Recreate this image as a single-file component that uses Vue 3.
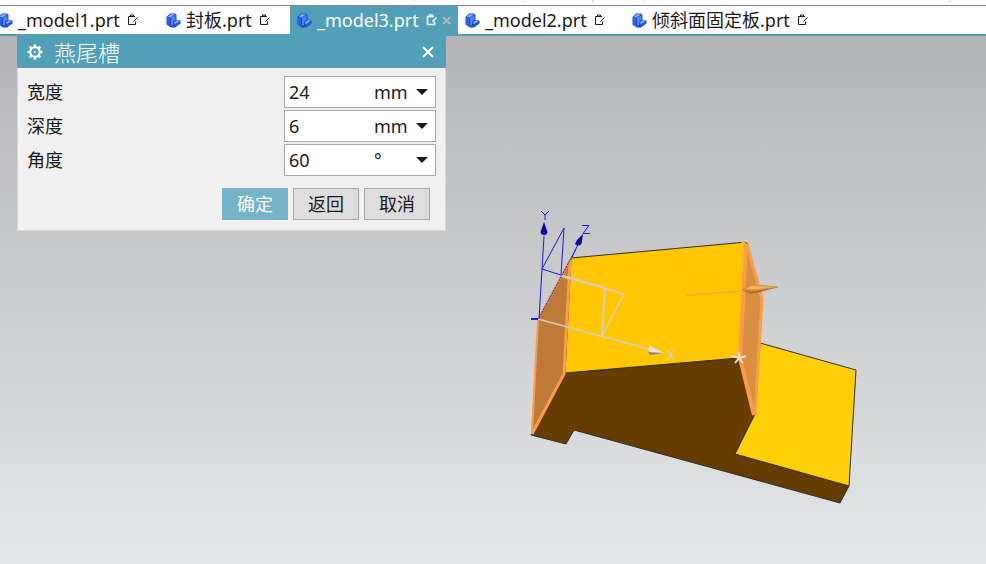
<script setup>
import { reactive } from 'vue'

const tabs = [
  { name: '_model1.prt', width: 161 },
  { name: '封板.prt', width: 131 },
  { name: '_model3.prt', width: 168, active: true },
  { name: '_model2.prt', width: 167 },
  { name: '倾斜面固定板.prt', width: 200 },
]

const fields = reactive([
  { id: 'width', label: '宽度', value: '24', unit: 'mm' },
  { id: 'depth', label: '深度', value: '6', unit: 'mm' },
  { id: 'angle', label: '角度', value: '60', unit: '°' },
])
</script>

<template>
  <div class="app">
    <div class="toolbar"><i></i><i></i><i></i><i></i><i></i></div>
    <nav class="tabs">
      <a
        v-for="t in tabs"
        :key="t.name"
        href="#"
        class="tab"
        :class="{ active: t.active }"
        :style="{ width: t.width + 'px' }"
      >
        <svg class="part" viewBox="0 0 15 15">
          <path d="M0.5 4 4 0.500H9L10.500 2V7L14.500 7.500V10.500L9 14.500H5L0.500 11.500Z" fill="#1a45c8" />
          <path d="M1 4 4 5V13L1 11Z" fill="#2b62e8" />
          <path d="M5 5 9.500 2V7L7 9V12L5 13Z" fill="#4a86f2" />
          <path d="M1.500 4 4.500 1.200H9L5 4.500Z" fill="#86aaf6" />
          <path d="M7.500 10 10.500 7.500H14L9.500 11Z" fill="#8ab6ff" />
          <path d="M8 11.500 14 8.500V10.500L9 13.500Z" fill="#2359de" />
        </svg>
        <span>{{ t.name }}</span>
        <svg class="modified" viewBox="0 0 11 12">
          <path d="M8 2.500H1.500V10.500H8.500V7.500M3.500 2.500V1H6.500V2.500M6.500 7.500 10.500 3.500" />
        </svg>
        <svg v-if="t.active" class="tab-close" viewBox="0 0 9 9"><path d="M1 1 8 8M8 1 1 8" /></svg>
      </a>
    </nav>

    <main class="viewport">
      <svg class="scene" width="986" height="528" viewBox="0 36 986 528">
        <path class="edge" fill="#663d00" d="M531 435 565 373 739 358 754 416 735 454 849 486 840 503 574 430 566 444Z" />
        <path class="edge" fill="#ffc604" d="M571 258 747 242 739 358 565 373Z" />
        <path class="edge" fill="#ffcf0a" d="M760 343 856 370 849 486 735 454 754 416Z" />
        <path fill="#be7a37" d="M571 259 565 373 531 435 538 319Z" />
        <path fill="none" stroke="#f99d4d" stroke-width="3" d="M570 260 564 374 532 434" />
        <path fill="none" stroke="#f99d4d" stroke-width="2" d="M571 258 538 319 532 434" />
        <path fill="#d98f40" d="M747 244 762 299 755 415 740 358Z" />
        <path fill="none" stroke="#f99d4d" stroke-width="4" d="M746 244 740 358 754 415" />
        <path fill="none" stroke="#f99d4d" stroke-width="3" d="M747 244 762 299 755 415" />
        <g fill="none" stroke="#d2cdc6" stroke-width="1.5">
          <path d="M538 319 652 350M561 275 624 294 602 336" />
          <path stroke-width="2" d="M561 276 605 288 602 336" />
          <path d="M667 350 674 360M674 350 667 360" />
        </g>
        <path fill="#e4e4df" d="M649 345 664 353 649 354Z" />
        <path fill="#8d8b80" d="M648 352 650 355 664 353Z" />
        <g fill="none" stroke="#1b1be2">
          <path d="M544 236 539 319M542 269 564 228 561 275 542 269" />
          <path stroke-dasharray="2 1" d="M539 318 576 249" />
          <path d="M572 257 580 240M541 211 545 215 549 211M545 215V220M582 225.500H589L583 233.500H590" />
          <path stroke-width="2" d="M531 319H538" />
        </g>
        <path fill="#0808a0" d="M544 222 547.500 232Q547 235 544 235T540.500 232Z" />
        <path fill="#0808a0" d="M583 234 581.500 244Q578 247 575 244L577 240Z" />
        <path fill="none" stroke="#f3a04c" d="M686 295.500 748 290.500" />
        <path fill="#b07128" d="M742 290 750 285 760 285 779 287 756 293 750 294Z" />
        <path fill="#dd963f" d="M743 290 750 285 760 285 779 287 755 291Z" />
        <path fill="#f2b566" d="M745 289 752 286 776 287 755 289Z" />
        <path fill="none" stroke="#e7c5a8" d="M746 235V241M741 243 752 240M742 239 751 245" />
        <path fill="none" stroke="#e4ded5" stroke-width="2" d="M739 351V357M732 356 739 358 746 356M739 358 735 363M739 358 743 363" />
      </svg>

      <form class="dialog" @submit.prevent>
        <header class="titlebar">
          <svg class="gear" viewBox="0 0 16 16">
            <circle cx="8" cy="8" r="4.700" fill="none" stroke="#fff" stroke-width="2" />
            <path stroke="#fff" stroke-width="2.500" d="M8 0.500V3M8 13V15.500M0.500 8H3M13 8H15.500M2.700 2.700 4.500 4.500M11.500 11.500 13.300 13.300M2.700 13.300 4.500 11.500M11.500 4.500 13.300 2.700" />
            <circle cx="8" cy="8" r="1" fill="#fff" />
          </svg>
          <h1>燕尾槽</h1>
          <button type="button" class="close" aria-label="关闭">
            <svg viewBox="0 0 12 12"><path d="M1 1 11 11M11 1 1 11" /></svg>
          </button>
        </header>
        <div class="fields">
          <div v-for="f in fields" :key="f.id" class="field">
            <label :for="f.id">{{ f.label }}</label>
            <div class="box">
              <input :id="f.id" v-model="f.value" type="text" />
              <span class="unit">{{ f.unit }}</span>
              <button type="button" class="drop" :aria-label="f.label">
                <svg viewBox="0 0 12 6"><path d="M0 0H12L6 6Z" /></svg>
              </button>
            </div>
          </div>
        </div>
        <footer class="actions">
          <button type="submit" class="btn primary">确定</button>
          <button type="button" class="btn">返回</button>
          <button type="button" class="btn">取消</button>
        </footer>
      </form>
    </main>
  </div>
</template>

<style>
body {
  margin: 0;
}
</style>

<style scoped>
.app {
  display: flex;
  flex-direction: column;
  min-height: 100vh;
  overflow: hidden;
  font: 400 18px/24px "Noto Sans", "Noto Sans CJK SC", sans-serif;
  color: #1a1a1a;
}
.toolbar {
  box-sizing: border-box;
  height: 6px;
  display: grid;
  grid-template-columns: 415px 109px 69px 52px 305px;
  background: #fff;
  border-bottom: 1px solid #7f8890;
}
.toolbar i {
  width: 1px;
  height: 2px;
  justify-self: end;
  background: #d5d5d5;
}
.tabs {
  display: flex;
  height: 28px;
  background: #fff;
  border-bottom: 2px solid #539fb8;
}
.tab {
  box-sizing: border-box;
  flex: none;
  display: flex;
  align-items: center;
  padding-left: 7px;
  color: #1a1a1a;
  text-decoration: none;
  white-space: nowrap;
}
.tab:first-child {
  padding-left: 0;
  margin-left: -2px;
}
.tab.active {
  background: #539fb8;
  color: #fff;
}
.part {
  flex: none;
  width: 15px;
  height: 15px;
  margin-right: 5px;
}
.modified {
  flex: none;
  width: 11px;
  height: 12px;
  margin-left: 7px;
  fill: none;
  stroke: currentColor;
}
.active .modified {
  stroke-width: 1.5;
}
.tab-close {
  flex: none;
  width: 9px;
  height: 9px;
  margin-left: 5px;
  fill: none;
  stroke: #b5b5b5;
  stroke-width: 2;
}
.viewport {
  position: relative;
  flex: 1;
  background: linear-gradient(#b3b4b6, #e5e6e8);
}
.scene {
  position: absolute;
  top: 0;
  left: 0;
}
.edge {
  stroke: #30302c;
  stroke-width: 1;
}
.dialog {
  position: absolute;
  top: 0;
  left: 17px;
  width: 429px;
  background: #f0f0f0;
  box-shadow: inset 0 0 0 1px #d8d8d8;
}
.titlebar {
  display: flex;
  align-items: center;
  height: 32px;
  padding: 0 12px 0 10px;
  background: #539fb8;
  color: #fff;
}
.titlebar h1 {
  flex: 1;
  margin: 0 0 0 11px;
  font-size: 22px;
  font-weight: 300;
}
.gear {
  width: 16px;
  height: 16px;
}
button,
input {
  padding: 0;
  border: 0;
  background: none;
  font: inherit;
  color: inherit;
}
.close {
  display: flex;
}
.close svg {
  width: 12px;
  height: 12px;
  fill: none;
  stroke: #fff;
  stroke-width: 2;
}
.fields {
  display: grid;
  gap: 2px;
  padding: 8px 10px 0;
}
.field {
  display: flex;
  align-items: center;
  justify-content: space-between;
}
.box {
  box-sizing: border-box;
  display: flex;
  align-items: center;
  width: 152px;
  height: 32px;
  padding: 0 7px 0 4px;
  border: 1px solid #a8a8a8;
  background: #fff;
}
.box input {
  width: 85px;
}
.drop {
  display: flex;
  margin-left: auto;
}
.drop svg {
  width: 12px;
  height: 6px;
  fill: #1a1a1a;
}
.actions {
  display: flex;
  justify-content: flex-end;
  gap: 5px;
  padding: 12px 16px 11px;
}
.btn {
  box-sizing: border-box;
  width: 66px;
  height: 32px;
  border: 1px solid #a8a8a8;
  background: #dddddd;
}
.btn.primary {
  border-color: #74b3c9;
  background: #74b3c9;
  color: #fff;
}
</style>
